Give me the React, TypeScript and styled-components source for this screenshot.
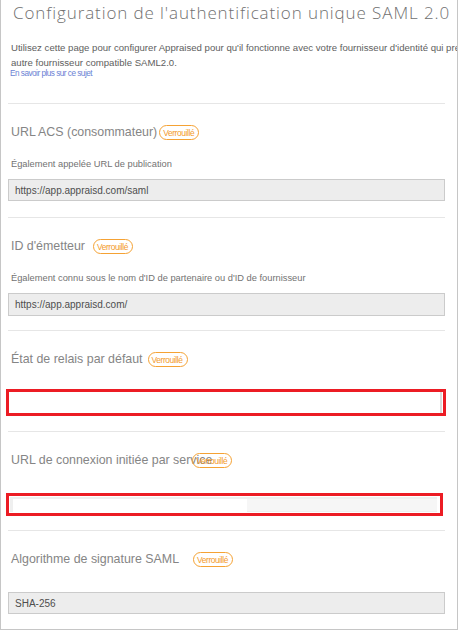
import React from "react";
import styled, { createGlobalStyle } from "styled-components";

const Global = createGlobalStyle`
  html, body { margin: 0; padding: 0; background: #ffffff; }
  body { font-family: "Liberation Sans", Arial, sans-serif; }
`;

const Frame = styled.div`
  box-sizing: border-box;
  width: 458px;
  height: 630px;
  border-left: 1px solid #c6c6c6;
  border-right: 1px solid #c6c6c6;
  border-bottom: 1px solid #c6c6c6;
  overflow: hidden;
  background: #fff;
`;

const Column = styled.div`
  margin-left: 7px;
  width: 437px;
`;

const Header = styled.header`
  padding-top: 2px;
  height: 103px;
  box-sizing: border-box;
`;

const Title = styled.h1`
  margin: 0 0 0 5px;
  font-family: "Open Sans", "Liberation Sans", sans-serif;
  font-weight: 300;
  font-size: 17px;
  line-height: 22px;
  letter-spacing: 0.9px;
  color: #707070;
  white-space: nowrap;
`;

const Description = styled.p`
  margin: 16px 0 0 3px;
  font-size: 9.6px;
  line-height: 15px;
  color: #5e5e5e;
  white-space: nowrap;
`;

const LearnMore = styled.a`
  display: block;
  margin: -1px 0 0 2px;
  font-size: 8.2px;
  line-height: 10px;
  letter-spacing: -0.5px;
  color: #6a7fd4;
  text-decoration: none;
`;

const Section = styled.section<{ $bottom: number }>`
  border-top: 1px solid #e6e6e6;
  padding: 21px 0 ${(p) => p.$bottom}px 0;
`;

const HeadingRow = styled.div`
  display: flex;
  align-items: center;
  height: 15px;
  padding-left: 3px;
`;

const Heading = styled.h2`
  margin: 0;
  font-weight: 400;
  font-size: 12.4px;
  line-height: 15px;
  color: #858585;
  white-space: nowrap;
`;

const Badge = styled.span<{ $gap: number }>`
  display: inline-flex;
  align-items: center;
  box-sizing: border-box;
  margin-left: ${(p) => p.$gap}px;
  width: 40px;
  height: 15px;
  padding-left: 3px;
  border: 1px solid #f5a234;
  border-radius: 8px;
  font-size: 8.4px;
  letter-spacing: -0.4px;
  color: #f39a2c;
  white-space: nowrap;
  overflow: visible;
  flex-shrink: 0;
  background: transparent;
`;

const Hint = styled.div`
  margin-top: 17px;
  padding-left: 3px;
  font-size: 9.3px;
  line-height: 14px;
  color: #727272;
  white-space: nowrap;
`;

const Field = styled.div<{ $top: number; $height: number }>`
  box-sizing: border-box;
  margin-top: ${(p) => p.$top}px;
  width: 437px;
  height: ${(p) => p.$height}px;
  border: 1px solid #cbcbcb;
  background: #ededed;
  padding-left: 6px;
  display: flex;
  align-items: center;
  font-size: 10px;
  color: #4e4e4e;
`;

const Highlight = styled.div<{ $top: number; $width: number; $height: number }>`
  box-sizing: border-box;
  margin-top: ${(p) => p.$top}px;
  margin-left: -2px;
  width: ${(p) => p.$width}px;
  height: ${(p) => p.$height}px;
  border: 3px solid #ec1c24;
  padding: 0;
  display: flex;
`;

const BlankInput = styled.div<{ $inset: number }>`
  flex: 1;
  margin-right: ${(p) => p.$inset}px;
  background: #ffffff;
  border-right: 2px solid #dcdcdc;
`;

const SplitInput = styled.div`
  flex: 1;
  margin: 1px 3px 1px 1px;
  display: grid;
  grid-template-columns: 3px 234px 1fr;
  background: #efefef;
`;

const WhitePart = styled.div`
  background: #ffffff;
  grid-column: 2;
  margin-top: 2px;
`;

const GreyPart = styled.div`
  grid-column: 3;
  background: #f6f6f6;
  margin: 2px 0 1px 0;
`;

export default function App() {
  return (
    <>
      <Global />
      <Frame>
        <Column>
          <Header>
            <Title>Configuration de l'authentification unique SAML 2.0</Title>
            <Description>
              Utilisez cette page pour configurer Appraised pour qu'il fonctionne avec votre fournisseur d'identité qui prend en charge un
              <br />
              autre fournisseur compatible SAML2.0.
            </Description>
            <LearnMore href="#">En savoir plus sur ce sujet</LearnMore>
          </Header>

          <Section $bottom={16}>
            <HeadingRow>
              <Heading>URL ACS (consommateur)</Heading>
              <Badge $gap={2}>Verrouillé</Badge>
            </HeadingRow>
            <Hint>Également appelée URL de publication</Hint>
            <Field $top={8} $height={22}>https://app.appraisd.com/saml</Field>
          </Section>

          <Section $bottom={14}>
            <HeadingRow>
              <Heading>ID d'émetteur</Heading>
              <Badge $gap={8}>Verrouillé</Badge>
            </HeadingRow>
            <Hint>Également connu sous le nom d'ID de partenaire ou d'ID de fournisseur</Hint>
            <Field $top={8} $height={23}>https://app.appraisd.com/</Field>
          </Section>

          <Section $bottom={15}>
            <HeadingRow>
              <Heading>État de relais par défaut</Heading>
              <Badge $gap={5}>Verrouillé</Badge>
            </HeadingRow>
            <Highlight $top={22} $width={440} $height={27}>
              <BlankInput $inset={1} />
            </Highlight>
          </Section>

          <Section $bottom={14}>
            <HeadingRow>
              <Heading>URL de connexion initiée par service</Heading>
              <Badge $gap={-20}>Verrouillé</Badge>
            </HeadingRow>
            <Highlight $top={25} $width={437} $height={23}>
              <SplitInput>
                <WhitePart />
                <GreyPart />
              </SplitInput>
            </Highlight>
          </Section>

          <Section $bottom={16}>
            <HeadingRow>
              <Heading>Algorithme de signature SAML</Heading>
              <Badge $gap={14}>Verrouillé</Badge>
            </HeadingRow>
            <Field $top={25} $height={22}>SHA-256</Field>
          </Section>
        </Column>
      </Frame>
    </>
  );
}
